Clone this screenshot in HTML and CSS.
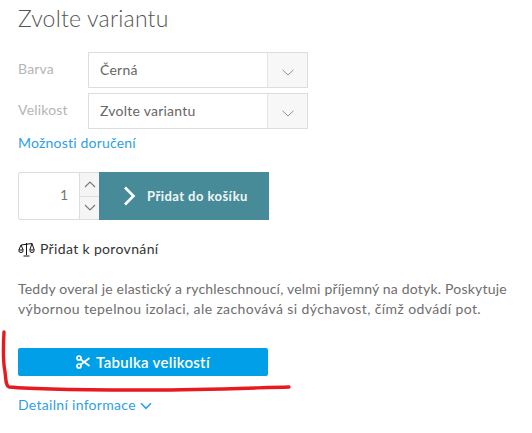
FILE: index.html
```html
<!DOCTYPE html>
<html lang="cs">
<head>
<meta charset="utf-8">
<title>Zvolte variantu</title>
<link rel="stylesheet" href="styles.css">
</head>
<body>
<main class="page">
  <h2 class="title">Zvolte variantu</h2>
  <div class="variants">
    <div class="variant">
      <span class="variant-label">Barva</span>
      <div class="select">
        <span class="select-value">Černá</span>
        <span class="select-arrow"><svg width="12" height="7" viewBox="0 0 12 7"><path d="M.5.8 6 6 11.5.8" fill="none" stroke="#777" stroke-width=".8"/></svg></span>
      </div>
    </div>
    <div class="variant">
      <span class="variant-label">Velikost</span>
      <div class="select">
        <span class="select-value">Zvolte variantu</span>
        <span class="select-arrow"><svg width="12" height="7" viewBox="0 0 12 7"><path d="M.5.8 6 6 11.5.8" fill="none" stroke="#777" stroke-width=".8"/></svg></span>
      </div>
    </div>
  </div>
  <a class="link delivery" href="#">Možnosti doručení</a>
  <div class="buy">
    <div class="qty">
      <span class="qty-value">1</span>
      <div class="qty-steps">
        <span class="qty-step"><svg width="12" height="7" viewBox="0 0 12 7"><path d="M1 6 6 1l5 5" fill="none" stroke="#777" stroke-width="1.1"/></svg></span>
        <span class="qty-step"><svg width="12" height="7" viewBox="0 0 12 7"><path d="M1 1l5 5 5-5" fill="none" stroke="#777" stroke-width="1.1"/></svg></span>
      </div>
    </div>
    <button class="add" type="button">
      <svg width="13" height="20" viewBox="0 0 13 20"><path d="M2 1.5 10.500 10 2 18.500" fill="none" stroke="#fff" stroke-width="2.600"/></svg>
      <span>Přidat do košíku</span>
    </button>
  </div>
  <div class="compare">
    <svg width="17" height="15" viewBox="0 0 17 15" fill="none" stroke="#111" stroke-width="1"><path d="M8.500 1v12M5.500 14h6M3 3l11-1.500M3 3 .8 8h4.400zM14 1.500 11.800 8h4.400zM.8 8.500a2.200 2 0 0 0 4.400 0M11.800 8.500a2.200 2 0 0 0 4.400 0"/></svg>
    <span>Přidat k porovnání</span>
  </div>
  <p class="desc">Teddy overal je elastický a rychleschnoucí, velmi příjemný na dotyk. Poskytuje <span class="desc-wide">výbornou tepelnou izolaci, ale zachovává si dýchavost, čímž odvádí pot.</span></p>
  <button class="sizes" type="button">
    <svg width="14" height="14" viewBox="0 0 14 14" fill="none" stroke="#fff"><circle cx="3" cy="3" r="2" stroke-width="1.700"/><circle cx="3" cy="11" r="2" stroke-width="1.700"/><path d="M4.500 4.200 13.500 11M4.500 9.800 13.500 3" stroke-width="1.800"/></svg>
    <span>Tabulka velikostí</span>
  </button>
  <a class="link details" href="#">Detailní informace <svg width="12" height="8" viewBox="0 0 12 8"><path d="M1 1.200 6 6.300l5-5.100" fill="none" stroke="#2e9fe6" stroke-width="1.600"/></svg></a>
</main>
<svg class="scribble" width="532" height="433" viewBox="0 0 532 433"><path d="M4 332C3 350 3 362 5 372 6 381 6 386 9 387 40 390 90 390 150 390 200 390 250 388 289 387" fill="none" stroke="#e8191f" stroke-width="3.400" stroke-linecap="round" stroke-linejoin="round"/></svg>
</body>
</html>
```
FILE: styles.css
```css
* { box-sizing: border-box; }
html, body { margin: 0; height: 100%; background: #fff; overflow: hidden; }
body { position: relative; font-family: "Lato", "Open Sans", sans-serif; color: #666; }
.page { padding: 5px 0 0 18px; width: 532px; }
.title { margin: 0; font-size: 23px; line-height: 26px; font-weight: 300; color: #555; letter-spacing: .2px; }
.variants { margin-top: 21px; display: flex; flex-direction: column; gap: 5px; width: 290px; }
.variant { display: flex; align-items: center; }
.variant-label { width: 70px; font-size: 14px; color: #b5b5b5; letter-spacing: .2px; padding-bottom: 3px; }
.select { flex: 1; height: 36px; display: flex; border: 1px solid #ddd; }
.select-value { flex: 1; padding-left: 11px; font-size: 14px; line-height: 34px; color: #666; letter-spacing: .25px; }
.select-arrow { width: 40px; background: #f7f7f7; border-left: 1px solid #e4e4e4; display: flex; align-items: center; justify-content: center; padding-top: 5px; }
.link { color: #2e9fe6; text-decoration: none; font-size: 14px; letter-spacing: .2px; }
.delivery { display: block; margin-top: 5px; line-height: 18px; }
.buy { margin-top: 20px; display: flex; height: 48px; width: 251px; }
.qty { width: 81px; display: flex; border: 1px solid #ddd; border-right: 0; border-radius: 3px 0 0 3px; }
.qty-value { flex: 1; text-align: right; padding-right: 11px; font-size: 14px; line-height: 44px; color: #777; }
.qty-steps { width: 20px; display: flex; flex-direction: column; border-left: 1px solid #ddd; background: #f5f5f5; }
.qty-step { flex: 1; display: flex; align-items: center; justify-content: center; }
.qty-step + .qty-step { border-top: 1px solid #ddd; }
.add { flex: 1; border: 0; padding: 0 0 0 24px; background: #478b98; color: #f2f6f7; display: flex; align-items: center; gap: 11px; font: 700 13px "Lato", sans-serif; letter-spacing: .45px; }
.compare { margin-top: 20px; display: flex; align-items: center; gap: 5px; font-size: 14px; line-height: 18px; color: #333; letter-spacing: .35px; }
.desc { margin: 21px 0 0; width: 510px; font-size: 14px; line-height: 20px; color: #6e6e6e; letter-spacing: .2px; }
.desc-wide { letter-spacing: .39px; }
.sizes { margin-top: 29px; width: 250px; height: 28px; border: 0; border-radius: 2px; background: #009fe8; color: #fff; display: flex; align-items: center; justify-content: center; gap: 6px; font: 600 15px "Lato", sans-serif; letter-spacing: .3px; }
.details { display: block; margin-top: 20px; line-height: 18px; letter-spacing: .3px; }
.scribble { position: absolute; left: 0; top: 0; pointer-events: none; }
```
